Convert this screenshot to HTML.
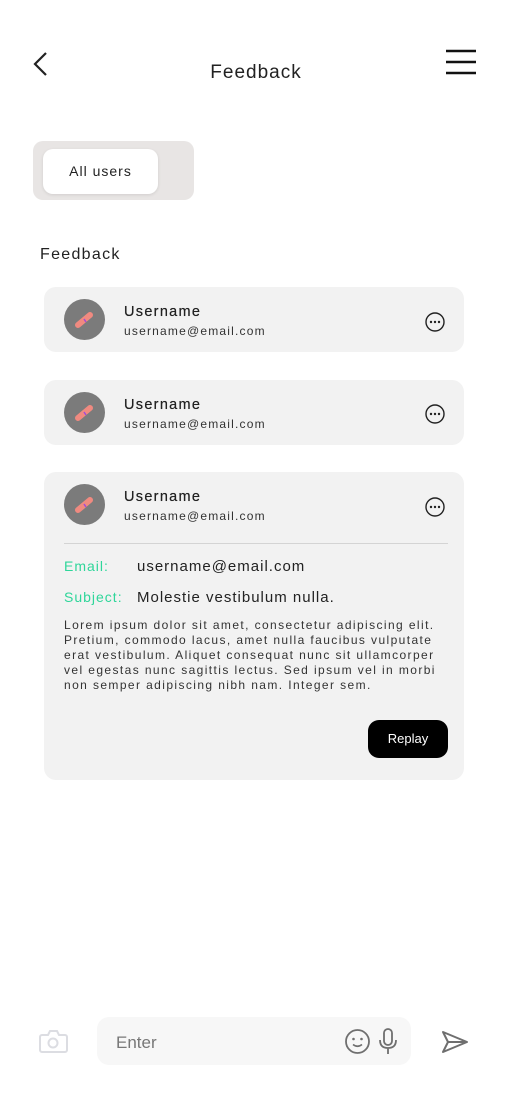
<!DOCTYPE html>
<html><head><meta charset="utf-8"><style>
*{margin:0;padding:0;box-sizing:border-box}
body{width:512px;height:1108px;background:#fff;position:relative;font-family:"Liberation Sans",sans-serif;color:#222;overflow:hidden}
.a{position:absolute}
.card{position:absolute;left:44px;width:420px;background:#f2f2f2;border-radius:12px}
.av{position:absolute;left:20px;top:12px;width:41px;height:41px;border-radius:50%;background:#7b7b7b}
.un{position:absolute;left:80px;top:17px;font-size:14.5px;font-weight:normal;letter-spacing:1.3px;color:#222;text-shadow:0 0 0.4px #222}
.em{position:absolute;left:80px;top:37px;font-size:12px;letter-spacing:1.2px;color:#333}
.dots{position:absolute;left:381px;top:24px}
.t{white-space:nowrap}
</style></head><body>
<svg class="a" style="left:30px;top:50px" width="22" height="30" viewBox="0 0 22 30"><path d="M16 3 L5 14 L16 25" fill="none" stroke="#222" stroke-width="2.2"/></svg>
<div class="a t" style="left:0;width:512px;top:62px;text-align:center;font-size:19px;letter-spacing:1px;color:#222">Feedback</div>
<svg class="a" style="left:445px;top:49px" width="32" height="26"><path d="M1 2H31M1 13H31M1 24H31" stroke="#111" stroke-width="2.4"/></svg>

<div class="a" style="left:33px;top:141px;width:161px;height:59px;background:#e8e5e4;border-radius:10px"></div>
<div class="a t" style="left:43px;top:149px;width:115px;height:45px;background:#fff;border-radius:10px;font-size:14px;letter-spacing:1px;text-align:center;line-height:45px;box-shadow:0 1px 3px rgba(0,0,0,.1)">All users</div>

<div class="a t" style="left:40px;top:246px;font-size:16px;letter-spacing:1.3px;color:#222">Feedback</div>

<div class="card" style="top:287px;height:65px">
<div class="av"></div><svg class="a" style="left:30px;top:23px" width="22" height="20"><path d="M4 15 L16 5" stroke="#f08a80" stroke-width="6" stroke-linecap="round"/><path d="M10 9 l2 3" stroke="#a24ad8" stroke-width="1.5"/></svg>
<div class="un t">Username</div><div class="em t">username@email.com</div>
<svg class="dots" width="22" height="22"><circle cx="10" cy="11" r="9" fill="none" stroke="#222" stroke-width="1.4"/><circle cx="6" cy="11" r="1.2" fill="#222"/><circle cx="10" cy="11" r="1.2" fill="#222"/><circle cx="14" cy="11" r="1.2" fill="#222"/></svg>
</div>
<div class="card" style="top:380px;height:65px">
<div class="av"></div><svg class="a" style="left:30px;top:23px" width="22" height="20"><path d="M4 15 L16 5" stroke="#f08a80" stroke-width="6" stroke-linecap="round"/><path d="M10 9 l2 3" stroke="#a24ad8" stroke-width="1.5"/></svg>
<div class="un t">Username</div><div class="em t">username@email.com</div>
<svg class="dots" style="top:23px" width="22" height="22"><circle cx="10" cy="11" r="9" fill="none" stroke="#222" stroke-width="1.4"/><circle cx="6" cy="11" r="1.2" fill="#222"/><circle cx="10" cy="11" r="1.2" fill="#222"/><circle cx="14" cy="11" r="1.2" fill="#222"/></svg>
</div>
<div class="card" style="top:472px;height:308px">
<div class="av"></div><svg class="a" style="left:30px;top:23px" width="22" height="20"><path d="M4 15 L16 5" stroke="#f08a80" stroke-width="6" stroke-linecap="round"/><path d="M10 9 l2 3" stroke="#a24ad8" stroke-width="1.5"/></svg>
<div class="un t">Username</div><div class="em t">username@email.com</div>
<svg class="dots" style="top:24px" width="22" height="22"><circle cx="10" cy="11" r="9" fill="none" stroke="#222" stroke-width="1.4"/><circle cx="6" cy="11" r="1.2" fill="#222"/><circle cx="10" cy="11" r="1.2" fill="#222"/><circle cx="14" cy="11" r="1.2" fill="#222"/></svg>
<div class="a" style="left:20px;top:71px;width:384px;height:1px;background:#d4d4d4"></div>
<div class="a t" style="left:20px;top:86px;font-size:14px;letter-spacing:1px;color:#2fd69a">Email:</div>
<div class="a t" style="left:93px;top:86px;font-size:15px;letter-spacing:1px;color:#222">username@email.com</div>
<div class="a t" style="left:20px;top:117px;font-size:14px;letter-spacing:1px;color:#2fd69a">Subject:</div>
<div class="a t" style="left:93px;top:117px;font-size:15px;letter-spacing:1px;color:#222">Molestie vestibulum nulla.</div>
<div class="a t" style="left:20px;top:146px;font-size:12px;line-height:15px;letter-spacing:1.4px;color:#333">Lorem ipsum dolor sit amet, consectetur adipiscing elit.<br>Pretium, commodo lacus, amet nulla faucibus vulputate<br>erat vestibulum. Aliquet consequat nunc sit ullamcorper<br>vel egestas nunc sagittis lectus. Sed ipsum vel in morbi<br>non semper adipiscing nibh nam. Integer sem.</div>
<div class="a t" style="left:324px;top:248px;width:80px;height:38px;background:#000;color:#fff;border-radius:11px;font-size:13px;text-align:center;line-height:38px">Replay</div>
</div>

<svg class="a" style="left:39px;top:1029px" width="29" height="25"><path d="M3 6h6l2-4h7l2 4h6a2 2 0 0 1 2 2v13a2 2 0 0 1-2 2H3a2 2 0 0 1-2-2V8a2 2 0 0 1 2-2z" fill="none" stroke="#dcdde2" stroke-width="2"/><circle cx="14" cy="14" r="4.5" fill="none" stroke="#dcdde2" stroke-width="2"/></svg>
<div class="a" style="left:97px;top:1017px;width:314px;height:48px;background:#f7f7f7;border-radius:12px"></div>
<div class="a t" style="left:116px;top:1033px;font-size:17px;color:#777">Enter</div>
<svg class="a" style="left:344px;top:1028px" width="27" height="27"><circle cx="13.5" cy="13.5" r="11.5" fill="none" stroke="#6f6f6f" stroke-width="1.8"/><circle cx="9.5" cy="11" r="1.3" fill="#6f6f6f"/><circle cx="17.5" cy="11" r="1.3" fill="#6f6f6f"/><path d="M9 16.5q4.5 3.5 9 0" fill="none" stroke="#6f6f6f" stroke-width="1.6"/></svg>
<svg class="a" style="left:378px;top:1028px" width="20" height="28"><rect x="6" y="1" width="8" height="16" rx="4" fill="none" stroke="#6f6f6f" stroke-width="1.8"/><path d="M2 12q0 8 8 8q8 0 8-8M10 20v6" fill="none" stroke="#6f6f6f" stroke-width="1.8"/></svg>
<svg class="a" style="left:440px;top:1030px" width="30" height="24"><path d="M3 2L27 12L3 22L8 12Z M8 12H27" fill="none" stroke="#6f6f6f" stroke-width="2" stroke-linejoin="round"/></svg>
</body></html>
